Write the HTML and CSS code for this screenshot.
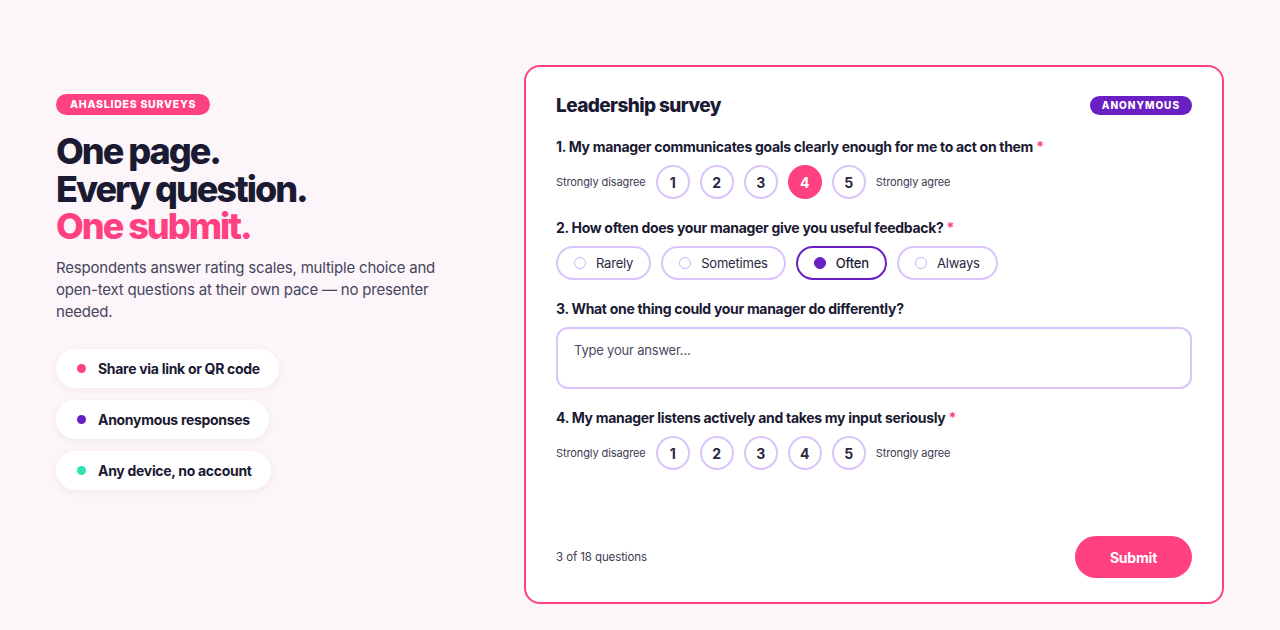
FILE: index.html
```html
<!DOCTYPE html>
<html lang="en">
<head>
<meta charset="utf-8">
<title>AhaSlides Surveys</title>
<link rel="stylesheet" href="styles.css">
</head>
<body>
<main class="page">
  <section class="intro">
    <span class="eyebrow">AHASLIDES SURVEYS</span>
    <h1 class="headline">
      <span>One page.</span>
      <span>Every question.</span>
      <span class="accent">One submit.</span>
    </h1>
    <p class="lede">Respondents answer rating scales, multiple choice and open-text questions at their own pace — no presenter needed.</p>
    <ul class="features">
      <li class="feature"><span class="dot dot-pink"></span>Share via link or QR code</li>
      <li class="feature"><span class="dot dot-purple"></span>Anonymous responses</li>
      <li class="feature"><span class="dot dot-teal"></span>Any device, no account</li>
    </ul>
  </section>

  <form class="survey">
    <header class="survey-head">
      <h2 class="survey-title">Leadership survey</h2>
      <span class="tag">ANONYMOUS</span>
    </header>

    <div class="questions">
      <div class="question">
        <p class="q-label">1. My manager communicates goals clearly enough for me to act on them <span class="req">*</span></p>
        <div class="scale">
          <span class="scale-end">Strongly disagree</span>
          <span class="rate">1</span>
          <span class="rate">2</span>
          <span class="rate">3</span>
          <span class="rate rate-on">4</span>
          <span class="rate">5</span>
          <span class="scale-end">Strongly agree</span>
        </div>
      </div>

      <div class="question">
        <p class="q-label">2. How often does your manager give you useful feedback? <span class="req">*</span></p>
        <div class="choices">
          <span class="choice"><span class="radio"></span>Rarely</span>
          <span class="choice"><span class="radio"></span>Sometimes</span>
          <span class="choice choice-on"><span class="radio"></span>Often</span>
          <span class="choice"><span class="radio"></span>Always</span>
        </div>
      </div>

      <div class="question">
        <p class="q-label">3. What one thing could your manager do differently?</p>
        <div class="answer">Type your answer...</div>
      </div>

      <div class="question">
        <p class="q-label">4. My manager listens actively and takes my input seriously <span class="req">*</span></p>
        <div class="scale">
          <span class="scale-end">Strongly disagree</span>
          <span class="rate">1</span>
          <span class="rate">2</span>
          <span class="rate">3</span>
          <span class="rate">4</span>
          <span class="rate">5</span>
          <span class="scale-end">Strongly agree</span>
        </div>
      </div>
    </div>

    <footer class="survey-foot">
      <span class="progress">3 of 18 questions</span>
      <span class="submit">Submit</span>
    </footer>
  </form>
</main>
</body>
</html>
```

FILE: styles.css
```css
* {
  box-sizing: border-box;
}

html,
body {
  margin: 0;
  padding: 0;
}

body {
  background: #fcf5f9;
  color: #1b1a33;
  font-family: Inter, "Noto Sans", Arial, sans-serif;
  height: 630px;
  overflow: hidden;
}

.page {
  width: 1168px;
  margin: 0 auto;
  padding-top: 65px;
  display: grid;
  grid-template-columns: 1fr 700px;
  gap: 56px;
  align-items: start;
}

/* left column */
.intro {
  padding-top: 27px;
}

.eyebrow {
  display: inline-block;
  background: #ff4081;
  color: #fff;
  font-size: 10.5px;
  font-weight: 800;
  letter-spacing: 0.75px;
  line-height: 21px;
  padding: 0 14px;
  border-radius: 999px;
}

.headline {
  margin: 18px 0 0;
  font-size: 36px;
  font-weight: 800;
  line-height: 37.5px;
  letter-spacing: -2px;
  color: #1b1a33;
}

.headline span {
  display: block;
}

.headline .accent {
  color: #ff4081;
}

.lede {
  margin: 11px 0 0;
  max-width: 390px;
  font-size: 15px;
  line-height: 22px;
  color: #46455c;
  letter-spacing: -0.2px;
}

.features {
  list-style: none;
  margin: 26px 0 0;
  padding: 0;
  display: flex;
  flex-direction: column;
  align-items: flex-start;
  gap: 12px;
}

.feature {
  display: flex;
  align-items: center;
  gap: 12px;
  height: 39px;
  padding: 0 19px 0 21px;
  background: #fff;
  border-radius: 999px;
  box-shadow: 0 2px 8px rgba(60, 20, 60, 0.06);
  font-size: 14px;
  font-weight: 700;
  letter-spacing: -0.3px;
  color: #1b1a33;
}

.dot {
  width: 9px;
  height: 9px;
  border-radius: 50%;
  flex: none;
}

.dot-pink { background: #ff4081; }
.dot-purple { background: #6a1fc2; }
.dot-teal { background: #2ee3b2; }

/* survey card */
.survey {
  height: 539px;
  background: #fff;
  border: 2px solid #ff4081;
  border-radius: 16px;
  padding: 26px 30px 24px;
  display: flex;
  flex-direction: column;
}

.survey-head {
  display: flex;
  align-items: center;
  justify-content: space-between;
  height: 24px;
}

.survey-title {
  margin: 0;
  font-size: 19px;
  font-weight: 800;
  letter-spacing: -0.6px;
  color: #1b1a33;
}

.tag {
  background: #6a1fc2;
  color: #fff;
  font-size: 10px;
  font-weight: 800;
  letter-spacing: 1px;
  line-height: 19px;
  padding: 0 12px;
  border-radius: 999px;
}

.questions {
  margin-top: 20px;
  display: flex;
  flex-direction: column;
  gap: 19px;
}

.question {
  display: flex;
  flex-direction: column;
  gap: 8px;
}

.q-label {
  margin: 0;
  font-size: 14px;
  font-weight: 700;
  line-height: 20px;
  letter-spacing: -0.3px;
  color: #1b1a33;
}

.req {
  color: #ff4081;
}

.scale {
  display: flex;
  align-items: center;
  gap: 10px;
  height: 34px;
}

.scale-end {
  font-size: 11px;
  color: #3c3b52;
  letter-spacing: -0.1px;
}

.rate {
  width: 34px;
  height: 34px;
  border-radius: 50%;
  border: 2px solid #dac4fb;
  display: flex;
  align-items: center;
  justify-content: center;
  font-size: 14px;
  font-weight: 700;
  color: #2a2940;
}

.rate-on {
  background: #ff4081;
  border-color: #ff4081;
  color: #fff;
}

.choices {
  display: flex;
  gap: 10px;
}

.choice {
  display: flex;
  align-items: center;
  gap: 10px;
  height: 34px;
  padding: 0 16px;
  border: 2px solid #dac4fb;
  border-radius: 999px;
  font-size: 13px;
  color: #2a2940;
  letter-spacing: -0.2px;
}

.radio {
  width: 12px;
  height: 12px;
  border-radius: 50%;
  border: 1.5px solid #cdb0f8;
  flex: none;
}

.choice-on {
  border-color: #6a1fc2;
  color: #1b1a33;
  font-weight: 500;
}

.choice-on .radio {
  background: #6a1fc2;
  border-color: #6a1fc2;
}

.answer {
  height: 62px;
  border: 2px solid #dac4fb;
  border-radius: 12px;
  padding: 13px 16px;
  font-size: 13px;
  color: #4a495e;
  letter-spacing: -0.2px;
}

.survey-foot {
  margin-top: auto;
  display: flex;
  align-items: center;
  justify-content: space-between;
}

.progress {
  font-size: 11.5px;
  color: #3c3b52;
  letter-spacing: -0.1px;
}

.submit {
  width: 117px;
  height: 42px;
  border-radius: 21px;
  background: #ff4081;
  color: #fff;
  font-size: 14px;
  font-weight: 700;
  display: flex;
  align-items: center;
  justify-content: center;
  letter-spacing: -0.2px;
}
```
